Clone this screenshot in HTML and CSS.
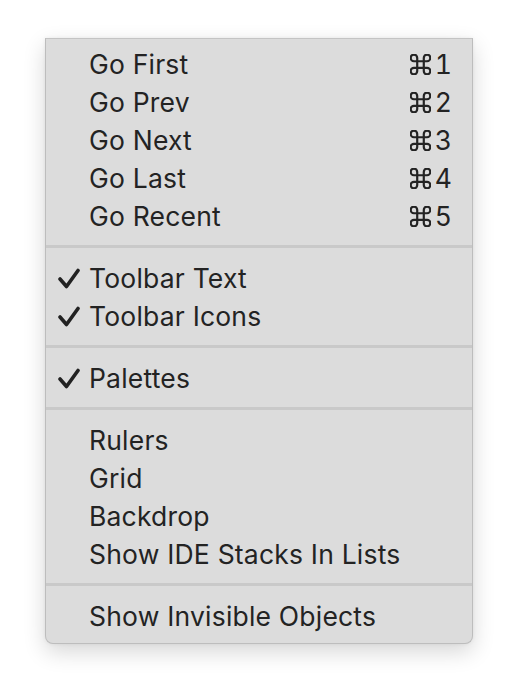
FILE: index.html
```html
<!DOCTYPE html>
<html>
<head>
<meta charset="utf-8">
<link rel="stylesheet" href="styles.css">
</head>
<body>
<div class="menu">
  <div class="item"><span class="check"></span><span class="label">Go First</span><span class="key"><svg class="cmd" viewBox="2.4 2.4 19.2 19.2" width="21" height="21"><path d="M15 6v12a3 3 0 1 0 3-3H6a3 3 0 1 0 3 3V6a3 3 0 1 0-3 3h12a3 3 0 1 0-3-3"/></svg>1</span></div>
  <div class="item"><span class="check"></span><span class="label">Go Prev</span><span class="key"><svg class="cmd" viewBox="2.4 2.4 19.2 19.2" width="21" height="21"><path d="M15 6v12a3 3 0 1 0 3-3H6a3 3 0 1 0 3 3V6a3 3 0 1 0-3 3h12a3 3 0 1 0-3-3"/></svg>2</span></div>
  <div class="item"><span class="check"></span><span class="label">Go Next</span><span class="key"><svg class="cmd" viewBox="2.4 2.4 19.2 19.2" width="21" height="21"><path d="M15 6v12a3 3 0 1 0 3-3H6a3 3 0 1 0 3 3V6a3 3 0 1 0-3 3h12a3 3 0 1 0-3-3"/></svg>3</span></div>
  <div class="item"><span class="check"></span><span class="label">Go Last</span><span class="key"><svg class="cmd" viewBox="2.4 2.4 19.2 19.2" width="21" height="21"><path d="M15 6v12a3 3 0 1 0 3-3H6a3 3 0 1 0 3 3V6a3 3 0 1 0-3 3h12a3 3 0 1 0-3-3"/></svg>4</span></div>
  <div class="item"><span class="check"></span><span class="label">Go Recent</span><span class="key"><svg class="cmd" viewBox="2.4 2.4 19.2 19.2" width="21" height="21"><path d="M15 6v12a3 3 0 1 0 3-3H6a3 3 0 1 0 3 3V6a3 3 0 1 0-3 3h12a3 3 0 1 0-3-3"/></svg>5</span></div>
  <div class="sep"></div>
  <div class="item"><span class="check"><svg viewBox="0 0 22 21" width="22" height="21"><path d="M2 11 L8.5 18.5 L20 2.5" fill="none" stroke="#222" stroke-width="3.6" stroke-linecap="round" stroke-linejoin="round"/></svg></span><span class="label">Toolbar Text</span></div>
  <div class="item"><span class="check"><svg viewBox="0 0 22 21" width="22" height="21"><path d="M2 11 L8.5 18.5 L20 2.5" fill="none" stroke="#222" stroke-width="3.6" stroke-linecap="round" stroke-linejoin="round"/></svg></span><span class="label">Toolbar Icons</span></div>
  <div class="sep"></div>
  <div class="item"><span class="check"><svg viewBox="0 0 22 21" width="22" height="21"><path d="M2 11 L8.5 18.5 L20 2.5" fill="none" stroke="#222" stroke-width="3.6" stroke-linecap="round" stroke-linejoin="round"/></svg></span><span class="label">Palettes</span></div>
  <div class="sep"></div>
  <div class="item"><span class="check"></span><span class="label">Rulers</span></div>
  <div class="item"><span class="check"></span><span class="label">Grid</span></div>
  <div class="item"><span class="check"></span><span class="label">Backdrop</span></div>
  <div class="item"><span class="check"></span><span class="label">Show IDE Stacks In Lists</span></div>
  <div class="sep"></div>
  <div class="item"><span class="check"></span><span class="label">Show Invisible Objects</span></div>
</div>
</body>
</html>
```
FILE: styles.css
```css
html, body {
  margin: 0;
  padding: 0;
  background: #ffffff;
}
body {
  width: 518px;
  height: 698px;
  overflow: hidden;
  padding-top: 38px;
  padding-left: 45px;
  box-sizing: border-box;
}
.menu {
  width: 428px;
  box-sizing: border-box;
  background: #dcdcdc;
  border: 1px solid #bdbdbd;
  border-top-color: #c4c4c4;
  border-radius: 0 0 8px 8px;
  padding: 6px 0 8px 0;
  box-shadow: 0 8px 22px rgba(0, 0, 0, 0.16), 0 0 4px rgba(0, 0, 0, 0.06);
  font-family: Inter, "Liberation Sans", sans-serif;
  font-size: 26.5px;
  color: #232323;
}
.item {
  display: flex;
  align-items: center;
  height: 38px;
  padding: 0 20px 0 10px;
}
.check {
  width: 33px;
  display: flex;
  align-items: center;
  justify-content: flex-start;
}
.check svg {
  display: block;
  margin-left: 2px;
}
.label {
  flex: 1;
  letter-spacing: 0.2px;
}
.key {
  display: flex;
  align-items: center;
  gap: 4px;
  font-variant-numeric: tabular-nums;
}
.cmd {
  display: block;
  fill: none;
  stroke: #232323;
  stroke-width: 2;
  margin-top: 1px;
}
.sep {
  height: 3px;
  background: #c9c9c9;
  margin: 10px 0 11px 0;
}
```
